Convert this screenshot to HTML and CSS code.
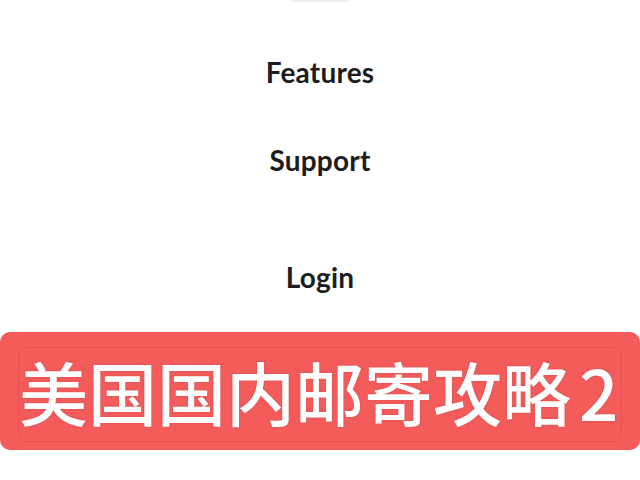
FILE: index.html
```html
<!DOCTYPE html>
<html lang="zh-CN">
<head>
<meta charset="utf-8">
<title>Menu</title>
<link rel="stylesheet" href="styles.css">
</head>
<body>
<div class="page">
  <div class="top-hint"></div>
  <nav class="menu">
    <a class="menu-item item-features" href="#">Features</a>
    <a class="menu-item item-support" href="#">Support</a>
    <a class="menu-item item-login" href="#">Login</a>
  </nav>
  <div class="banner">
    <div class="banner-inner">
      <span class="banner-text">美国国内邮寄攻略<span class="digit">2</span></span>
    </div>
  </div>
</div>
</body>
</html>
```

FILE: styles.css
```css
html, body {
  margin: 0;
  padding: 0;
  background: #ffffff;
}
.page {
  width: 640px;
  height: 480px;
  overflow: hidden;
  display: flex;
  flex-direction: column;
  align-items: center;
}
.top-hint {
  width: 60px;
  height: 2px;
  background: #f1f1f1;
  border-radius: 0 0 2px 2px;
}
.menu {
  display: flex;
  flex-direction: column;
  align-items: center;
  width: 100%;
}
.menu-item {
  font-family: Lato, "Noto Sans", sans-serif;
  font-weight: 700;
  font-size: 28px;
  line-height: 30px;
  color: #1d1d1d;
  text-decoration: none;
  letter-spacing: 0.2px;
}
.item-features { margin-top: 55px; }
.item-support { margin-top: 58px; }
.item-login { margin-top: 87px; }
.banner {
  margin-top: 40px;
  width: 640px;
  height: 118px;
  flex-shrink: 0;
  background: #f45c5c;
  border-radius: 10px;
  padding: 15px 18px 8px 18px;
  box-sizing: border-box;
  display: flex;
}
.banner-inner {
  flex: 1;
  border: 1px solid rgba(200, 60, 60, 0.35);
  border-radius: 8px;
  display: flex;
  align-items: center;
  justify-content: flex-start;
  padding-bottom: 8px;
}
.banner-text {
  font-family: "Noto Sans CJK SC", sans-serif;
  font-weight: 500;
  font-size: 69px;
  line-height: 80px;
  color: #ffffff;
  white-space: nowrap;
  text-shadow: 0 0 2px rgba(140, 30, 30, 0.35);
}
.digit {
  margin-left: 8px;
}
```
